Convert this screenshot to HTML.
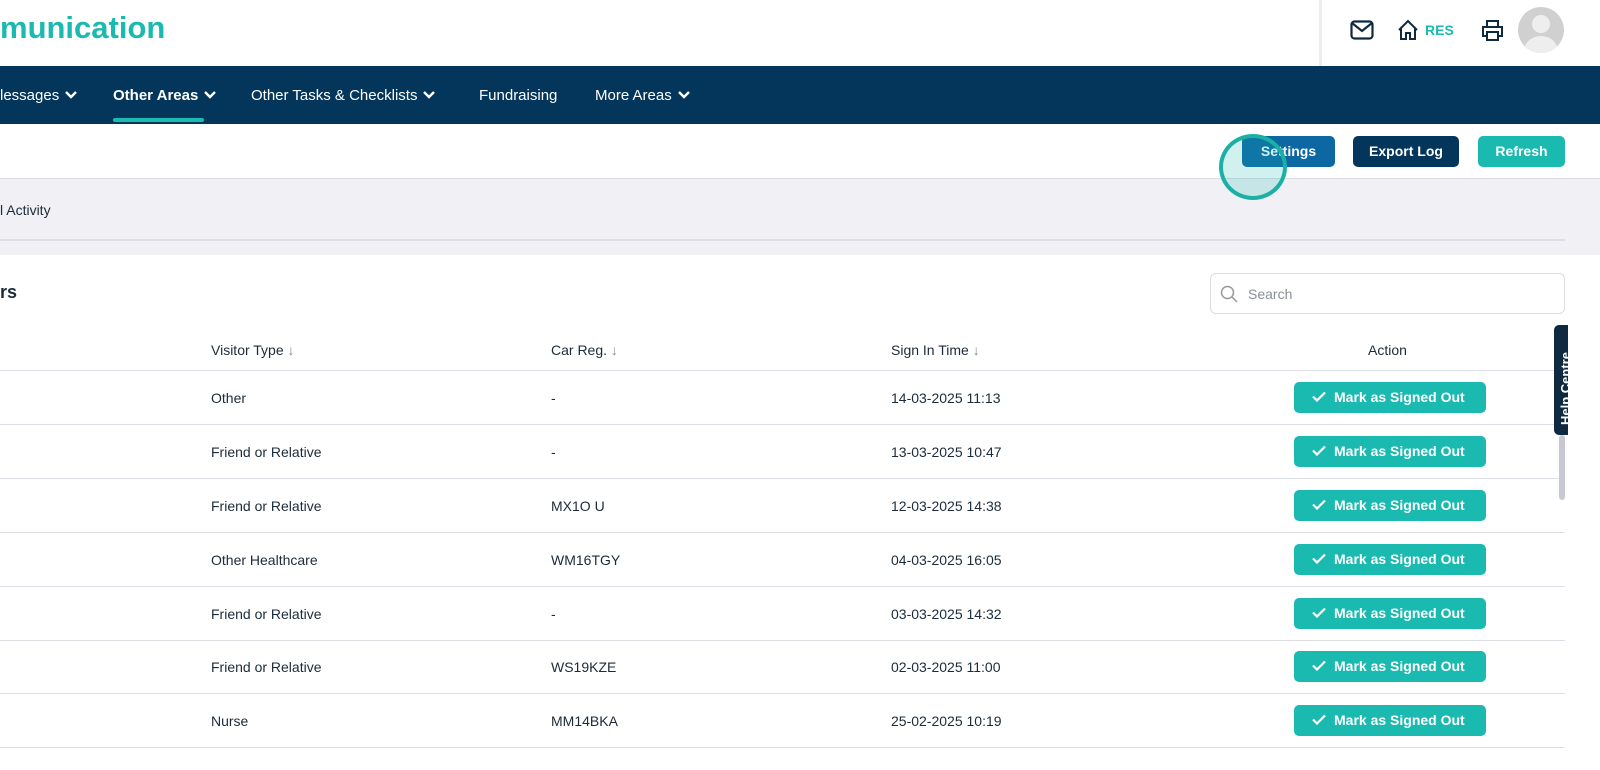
<!DOCTYPE html><html><head><style>
*{box-sizing:border-box;margin:0;padding:0}
body{width:1600px;height:770px;overflow:hidden;background:#fff;font-family:"Liberation Sans",sans-serif;color:#1c2b3a;position:relative}
.a{position:absolute}
.nav{top:66px;left:0;width:1600px;height:58px;background:#03365a}
.nav span{position:absolute;top:21px;color:#fff;font-size:15px}
.nav svg{margin-left:6px;vertical-align:1px}
.btn{position:absolute;border-radius:5px;color:#fff;font-size:14px;font-weight:bold;text-align:center;line-height:31px;height:31px}
.row{position:absolute;left:0;width:1565px;height:54px;border-bottom:1px solid #dcdde6;font-size:14px}
.row span{position:absolute;top:19px}
.mk{position:absolute;left:1294px;top:11px;width:192px;height:31px;background:#1bbab0;border-radius:5px;color:#fff;font-weight:bold;font-size:14px;line-height:31px;padding-left:40px}
.mk svg{position:absolute;left:18px;top:9px}
.th{position:absolute;top:342px;font-size:14px;color:#1c2b3a}
</style></head><body>
<div class="a" style="left:0;top:10px;font-size:31px;font-weight:bold;color:#1bbab0">munication</div>
<div class="a" style="left:1319px;top:0;width:3px;height:66px;background:#eee"></div>
<svg class="a" style="left:1350px;top:20px" width="24" height="20" viewBox="0 0 24 20"><rect x="1.5" y="1.5" width="21" height="17" rx="3" fill="none" stroke="#0f2a40" stroke-width="2.2"/><path d="M2 3l10 8 10-8" fill="none" stroke="#0f2a40" stroke-width="2.2"/></svg>
<svg class="a" style="left:1397px;top:19px" width="22" height="22" viewBox="0 0 22 22"><path d="M2 11L11 2l9 9M4 9v11h5v-6h4v6h5V9" fill="none" stroke="#0f2a40" stroke-width="2"/></svg>
<div class="a" style="left:1425px;top:22px;font-size:14px;font-weight:bold;color:#1bbab0">RES</div>
<svg class="a" style="left:1481px;top:19px" width="23" height="23" viewBox="0 0 23 23"><path d="M6 8V2h11v6M6 17H2V8h19v9h-4M6 13h11v8H6z" fill="none" stroke="#0f2a40" stroke-width="2"/></svg>
<div class="a" style="left:1518px;top:7px;width:46px;height:46px;border-radius:50%;background:#d0d0d0;overflow:hidden"><div class="a" style="left:14px;top:8px;width:18px;height:18px;border-radius:50%;background:#eee"></div><div class="a" style="left:6px;top:29px;width:34px;height:30px;border-radius:50%;background:#eee"></div></div>
<div class="a nav"><span style="left:0">lessages<svg width="12" height="8" viewBox="0 0 12 8"><path d="M1 1l5 5 5-5" fill="none" stroke="#fff" stroke-width="2.4"/></svg></span><span style="left:113px;font-weight:bold">Other Areas<svg width="12" height="8" viewBox="0 0 12 8"><path d="M1 1l5 5 5-5" fill="none" stroke="#fff" stroke-width="2.4"/></svg></span><span style="left:251px">Other Tasks &amp; Checklists<svg width="12" height="8" viewBox="0 0 12 8"><path d="M1 1l5 5 5-5" fill="none" stroke="#fff" stroke-width="2.4"/></svg></span><span style="left:479px">Fundraising</span><span style="left:595px">More Areas<svg width="12" height="8" viewBox="0 0 12 8"><path d="M1 1l5 5 5-5" fill="none" stroke="#fff" stroke-width="2.4"/></svg></span>
<div class="a" style="left:113px;top:52px;width:91px;height:4px;background:#1bbab0;border-radius:2px"></div></div>
<div class="a" style="left:0;top:178px;width:1600px;height:77px;background:#f0f0f5;border-top:1px solid #dcdde6"></div>
<div class="a" style="left:0;top:239px;width:1565px;height:2px;background:#dcdde6"></div>
<div class="btn" style="left:1242px;top:136px;width:93px;background:#0c67a3">Settings</div>
<div class="btn" style="left:1353px;top:136px;width:106px;background:#03365a">Export Log</div>
<div class="btn" style="left:1478px;top:136px;width:87px;background:#1bbab0">Refresh</div>
<div class="a" style="left:1219px;top:134px;width:68px;height:66px;border-radius:50%;border:4px solid #1bb0a5;background:rgba(27,186,176,.2)"></div>
<div class="a" style="left:0;top:202px;font-size:14px">l Activity</div>
<div class="a" style="left:0;top:282px;font-size:18px;font-weight:bold">rs</div>
<div class="a" style="left:1210px;top:273px;width:355px;height:41px;border:1px solid #dcdde6;border-radius:6px"><svg class="a" style="left:9px;top:11px" width="18" height="18" viewBox="0 0 18 18"><circle cx="7.5" cy="7.5" r="6" fill="none" stroke="#999" stroke-width="1.5"/><path d="M12 12l5 5" stroke="#999" stroke-width="1.5"/></svg><span class="a" style="left:37px;top:12px;font-size:14px;color:#8a8f99">Search</span></div>
<div class="th" style="left:211px">Visitor Type <span style="color:#888">↓</span></div>
<div class="th" style="left:551px">Car Reg. <span style="color:#888">↓</span></div>
<div class="th" style="left:891px">Sign In Time <span style="color:#888">↓</span></div>
<div class="th" style="left:1368px">Action</div>
<div class="a" style="left:0;top:370px;width:1565px;height:1px;background:#dcdde6"></div>
<div class="row" style="top:371px"><span style="left:211px">Other</span><span style="left:551px">-</span><span style="left:891px">14-03-2025 11:13</span><div class="mk"><svg width="14" height="11" viewBox="0 0 14 11"><path d="M1 5.5l4 4 8-8" fill="none" stroke="#fff" stroke-width="2.2"/></svg>Mark as Signed Out</div></div>
<div class="row" style="top:425px"><span style="left:211px">Friend or Relative</span><span style="left:551px">-</span><span style="left:891px">13-03-2025 10:47</span><div class="mk"><svg width="14" height="11" viewBox="0 0 14 11"><path d="M1 5.5l4 4 8-8" fill="none" stroke="#fff" stroke-width="2.2"/></svg>Mark as Signed Out</div></div>
<div class="row" style="top:479px"><span style="left:211px">Friend or Relative</span><span style="left:551px">MX1O U</span><span style="left:891px">12-03-2025 14:38</span><div class="mk"><svg width="14" height="11" viewBox="0 0 14 11"><path d="M1 5.5l4 4 8-8" fill="none" stroke="#fff" stroke-width="2.2"/></svg>Mark as Signed Out</div></div>
<div class="row" style="top:533px"><span style="left:211px">Other Healthcare</span><span style="left:551px">WM16TGY</span><span style="left:891px">04-03-2025 16:05</span><div class="mk"><svg width="14" height="11" viewBox="0 0 14 11"><path d="M1 5.5l4 4 8-8" fill="none" stroke="#fff" stroke-width="2.2"/></svg>Mark as Signed Out</div></div>
<div class="row" style="top:587px"><span style="left:211px">Friend or Relative</span><span style="left:551px">-</span><span style="left:891px">03-03-2025 14:32</span><div class="mk"><svg width="14" height="11" viewBox="0 0 14 11"><path d="M1 5.5l4 4 8-8" fill="none" stroke="#fff" stroke-width="2.2"/></svg>Mark as Signed Out</div></div>
<div class="row" style="top:640px"><span style="left:211px">Friend or Relative</span><span style="left:551px">WS19KZE</span><span style="left:891px">02-03-2025 11:00</span><div class="mk"><svg width="14" height="11" viewBox="0 0 14 11"><path d="M1 5.5l4 4 8-8" fill="none" stroke="#fff" stroke-width="2.2"/></svg>Mark as Signed Out</div></div>
<div class="row" style="top:694px"><span style="left:211px">Nurse</span><span style="left:551px">MM14BKA</span><span style="left:891px">25-02-2025 10:19</span><div class="mk"><svg width="14" height="11" viewBox="0 0 14 11"><path d="M1 5.5l4 4 8-8" fill="none" stroke="#fff" stroke-width="2.2"/></svg>Mark as Signed Out</div></div>
<div class="a" style="left:1559px;top:435px;width:6px;height:65px;background:#c8c8d2;border-radius:3px"></div>
<div class="a" style="left:1554px;top:325px;width:14px;height:110px;background:#0f2a40;border-radius:5px 0 0 5px;overflow:hidden"><div class="a" style="left:4px;top:100px;transform:rotate(-90deg);transform-origin:0 0;color:#fff;font-size:13px;font-weight:bold;white-space:nowrap">Help Centre</div></div>
<div class="a" style="left:1568px;top:255px;width:32px;height:515px;background:#fff"></div>
</body></html>
